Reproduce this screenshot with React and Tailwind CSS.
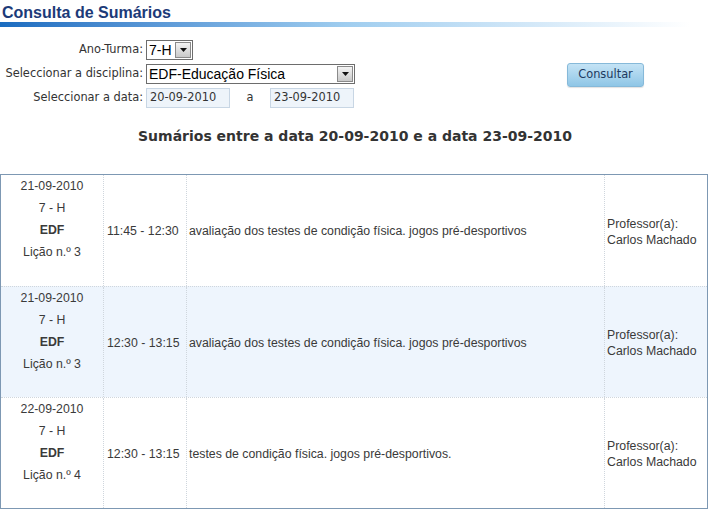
import React from 'react';

const rows = [
    { date: '21-09-2010', turma: '7 - H', disc: 'EDF', licao: 'Lição n.º 3', hora: '11:45 - 12:30', sumario: 'avaliação dos testes de condição física. jogos pré-desportivos', alt: false },
    { date: '21-09-2010', turma: '7 - H', disc: 'EDF', licao: 'Lição n.º 3', hora: '12:30 - 13:15', sumario: 'avaliação dos testes de condição física. jogos pré-desportivos', alt: true },
    { date: '22-09-2010', turma: '7 - H', disc: 'EDF', licao: 'Lição n.º 4', hora: '12:30 - 13:15', sumario: 'testes de condição física. jogos pré-desportivos.', alt: false },
];

const Arrow = () => (
    <div className="w-[16px] h-[16px] border border-[#8a8a8a] bg-gradient-to-b from-[#f4f4f4] to-[#c9c9c9] flex items-center justify-center">
        <svg width="7" height="4" viewBox="0 0 7 4"><path d="M0 0 L7 0 L3.5 4 Z" fill="#111" /></svg>
    </div>
);

const FakeSelect = ({ value, width }) => (
    <div className={`h-[20px] ${width} border border-[#6d6d6d] bg-white flex items-center justify-between pl-[2px] pr-[1px]`}>
        <span className="text-[14px] text-black leading-none font-['Liberation_Sans',Arial,sans-serif]">{value}</span>
        <Arrow />
    </div>
);

const DateBox = ({ value }) => (
    <div className="h-[20px] w-[84px] border border-[#c8d6e4] bg-[#eef4fa] flex items-center pl-[3px] text-[11.4px] text-[#333] font-['DejaVu_Sans',Verdana,sans-serif]">
        {value}
    </div>
);

export default function App() {
    return (
        <div className="w-[716px] h-[516px] bg-white overflow-hidden font-['DejaVu_Sans',Verdana,sans-serif]">
            <h1 className="pl-[2px] pt-[3px] text-[16px] leading-[19px] font-bold text-[#1c3a78] font-['Liberation_Sans',Arial,sans-serif]">
                Consulta de Sumários
            </h1>
            <div className="h-[5px] w-[690px] bg-gradient-to-r from-[#1a6cc0] via-[#9fcdef] to-white"></div>

            <div className="flex mt-[13px]">
                <div className="flex flex-col gap-[4px] text-[11.4px] text-[#333]">
                    <div className="flex items-center">
                        <span className="w-[143px] text-right">Ano-Turma:</span>
                        <div className="ml-[3px]"><FakeSelect value="7-H" width="w-[47px]" /></div>
                    </div>
                    <div className="flex items-center">
                        <span className="w-[143px] text-right">Seleccionar a disciplina:</span>
                        <div className="ml-[3px]"><FakeSelect value="EDF-Educação Física" width="w-[209px]" /></div>
                    </div>
                    <div className="flex items-center">
                        <span className="w-[143px] text-right">Seleccionar a data:</span>
                        <div className="ml-[3px]"><DateBox value="20-09-2010" /></div>
                        <span className="w-[40px] text-center">a</span>
                        <DateBox value="23-09-2010" />
                    </div>
                </div>
                <div className="ml-[212px] mt-[21px]">
                    <button className="w-[77px] h-[24px] rounded-[3px] border border-[#86b9d9] bg-gradient-to-b from-[#c4e3f5] to-[#8fc6e6] text-[11.4px] text-[#1d3a5f] shadow-[0_1px_1px_rgba(0,0,0,0.12)]">
                        Consultar
                    </button>
                </div>
            </div>

            <h2 className="mt-[18px] text-center pr-[6px] text-[14px] font-bold text-[#333]">
                Sumários entre a data 20-09-2010 e a data 23-09-2010
            </h2>

            <div className="mt-[27px] w-[708px] border border-[#7d98b3] font-['Liberation_Sans',Arial,sans-serif] text-[12.3px] text-[#3a3a3a]">
                {rows.map((r, i) => (
                    <div
                        key={i}
                        className={`grid grid-cols-[102px_83px_418px_1fr] h-[111px] ${i > 0 ? 'border-t border-dotted border-[#cfd6dd]' : ''} ${r.alt ? 'bg-[#eef5fd]' : 'bg-white'}`}
                    >
                        <div className="flex flex-col items-center leading-[22px]">
                            <span>{r.date}</span>
                            <span>{r.turma}</span>
                            <span className="font-bold">{r.disc}</span>
                            <span>{r.licao}</span>
                        </div>
                        <div className="border-l border-dotted border-[#cfd6dd] flex items-center pl-[3px] pt-[2px]">{r.hora}</div>
                        <div className="border-l border-dotted border-[#cfd6dd] flex items-center pl-[2px] pt-[2px]">{r.sumario}</div>
                        <div className="border-l border-dotted border-[#cfd6dd] flex items-center pl-[2px] pt-[2px] leading-[16px]">
                            <span>Professor(a):<br />Carlos Machado</span>
                        </div>
                    </div>
                ))}
            </div>
        </div>
    );
}
